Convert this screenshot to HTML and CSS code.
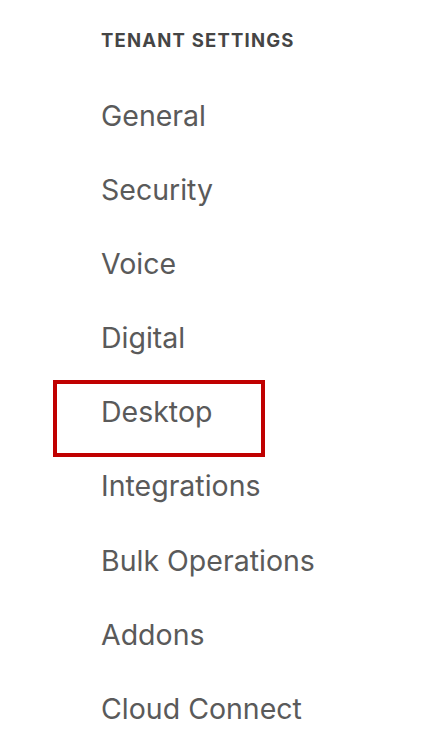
FILE: index.html
```html
<!DOCTYPE html>
<html>
<head>
<meta charset="utf-8">
<link rel="stylesheet" href="styles.css">
</head>
<body>
<nav class="menu">
  <div class="menu-title">TENANT SETTINGS</div>
  <ul class="menu-list">
    <li class="menu-item">General</li>
    <li class="menu-item">Security</li>
    <li class="menu-item">Voice</li>
    <li class="menu-item">Digital</li>
    <li class="menu-item menu-item--marked">Desktop</li>
    <li class="menu-item">Integrations</li>
    <li class="menu-item">Bulk Operations</li>
    <li class="menu-item">Addons</li>
    <li class="menu-item">Cloud Connect</li>
  </ul>
</nav>
</body>
</html>
```
FILE: styles.css
```css
html, body {
  margin: 0;
  padding: 0;
  background: #ffffff;
}
body {
  font-family: Inter, "Noto Sans", sans-serif;
  color: #5a5a5a;
}
.menu {
  padding: 29px 0 0 101px;
}
.menu-title {
  font-size: 18.5px;
  font-weight: 700;
  color: #454545;
  line-height: 22px;
  letter-spacing: 1.2px;
}
.menu-list {
  list-style: none;
  margin: 0;
  padding: 0;
  margin-top: 48px;
}
.menu-item {
  font-size: 28.5px;
  line-height: 34px;
  height: 74.1px;
  position: relative;
  display: flex;
  align-items: flex-start;
}
.menu-item--marked::after {
  content: "";
  position: absolute;
  left: -48px;
  top: -15px;
  width: 204px;
  height: 69px;
  border: 4px solid #c00000;
}
```
